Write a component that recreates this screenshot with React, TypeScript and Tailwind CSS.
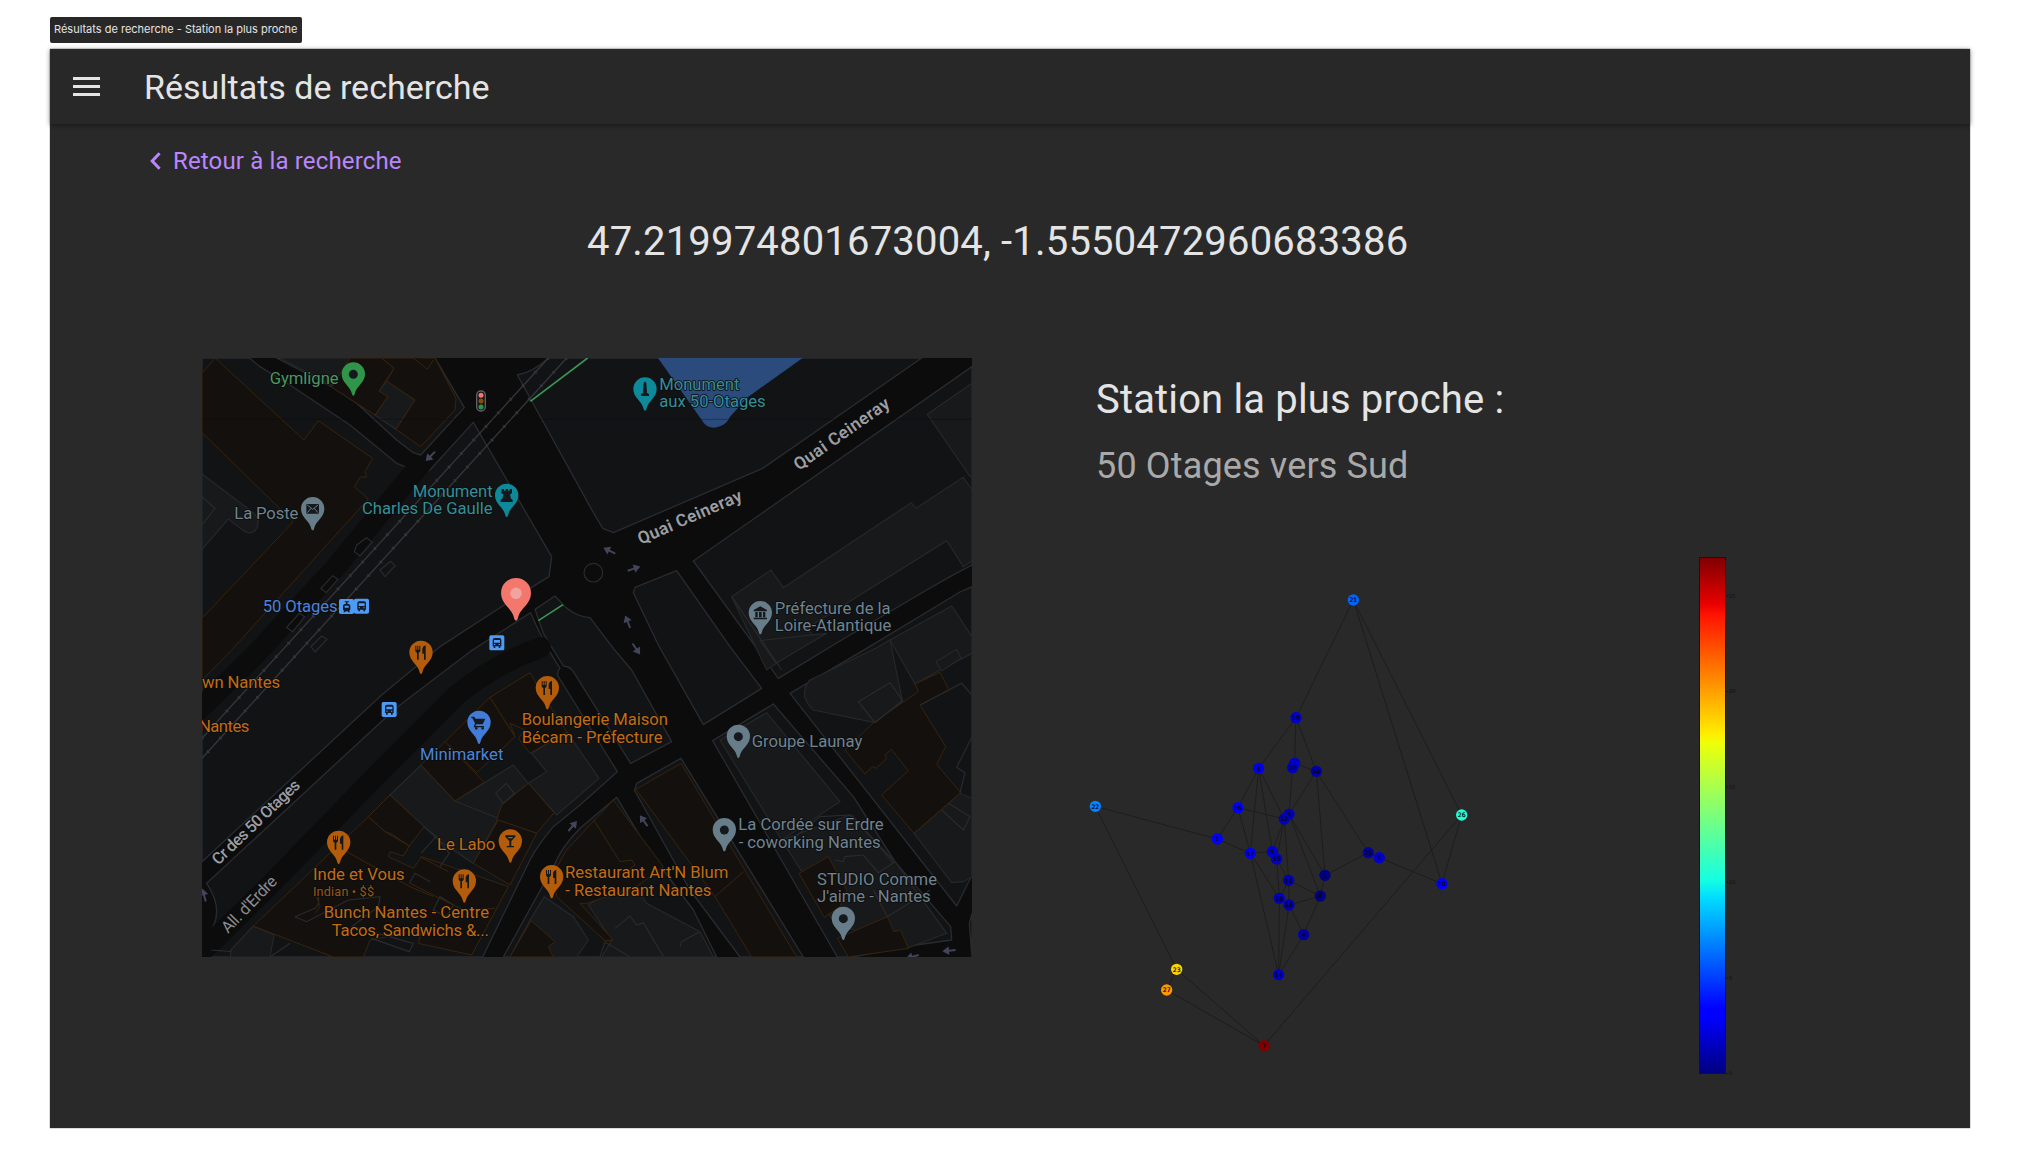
import { Fragment } from "react";
import type { ReactNode } from "react";

/* ---------- map data (units: a third of a pixel) ---------- */

const LAND = "#111315";
const GREY = "#17191a";
const BROWN = "#14100d";

const blocks: string[] = [
  // city blocks bounded by streets
  "M6 24 H148 L180 50 L270 105 L450 225 L590 340 L634 357 L668 367 L690 360 L820 217 L1055 620 L1047 680 L990 715 L720 890 L545 1035 L6 1535 Z",
  "M230 24 L410 118 L470 160 L590 270 L640 308 L662 315 L793 173 L705 24 Z",
  "M1045 24 Q1000 66 952 75 L1170 470 L1208 535 L1240 548 L1688 355 L2165 24 Z",
  "M1305 712 L1430 662 L1590 890 L1685 1015 L1510 1124 L1375 885 L1300 728 Z",
  "M1480 633 L2316 50 V645 L2250 680 L2180 720 L1925 870 L1735 985 L1670 895 Z",
  "M1770 1030 L2000 895 L2280 726 L2316 710 V1575 L2270 1668 Z",
  "M1538 1172 L1720 1062 L1960 1340 L2085 1535 L2252 1730 L2255 1770 L2125 1788 L1960 1821 H1912 Z",
  "M1005 778 L1065 738 L1095 770 Q1130 800 1170 803 L1240 895 L1295 960 L1415 1175 L1292 1240 L1120 965 Q1112 950 1090 948 L1030 850 Z",
  "M1305 1318 L1310 1300 L1443 1225 L1810 1821 H1620 L1470 1620 L1303 1320 Z",
  "M1140 1435 L1250 1342 L1345 1500 L1480 1680 L1550 1821 H910 L1060 1550 Q1085 1490 1140 1435 Z",
  "M810 905 L992 788 L1008 825 L1040 890 L1080 955 Q1070 965 1074 978 L1252 1265 L1140 1365 L1060 1430 Q1010 1490 990 1530 L848 1821 H34 L34 1800 L20 1758 Q80 1690 20 1600 L560 1100 L600 1065 Z",
  "M2316 1690 L2308 1722 L2316 1821 Z",
];

const greyAreas: string[] = [
  "M240 24 L395 105 L455 24 Z",
  "M560 93 L645 150 L588 238 L525 195 L563 140 L537 123 Z",
  "M6 372 L160 488 Q182 510 170 535 Q155 560 128 540 L85 507 L6 598 Z",
  "M2182 193 L2316 100 V378 L2310 380 Z",
  "M1595 740 L1713 660 L1750 713 L2134 458 L2148 475 L2290 382 L2316 420 V632 L2290 650 L2240 572 L1820 835 L1845 862 L1700 960 Z",
  "M1680 872 L1728 940 L1880 850 Z",
  "M1830 990 Q1810 1010 1814 1040 Q1820 1060 1840 1080 L2025 1118 L2107 1052 L2070 870 L2030 893 Z",
  "M2070 870 L2255 768 L2316 860 V910 L2210 965 L2145 1002 Z",
  "M2208 935 L2270 898 L2283 925 L2225 963 Z",
  "M1560 1170 L1700 1088 L1920 1355 L1745 1470 Z",
  "M1745 1470 L1950 1395 L2085 1535 L2240 1750 L2120 1795 L1905 1720 Z",
  "M2142 1450 L2280 1330 L2316 1345 V1580 L2290 1595 L2255 1598 Z",
  "M570 1335 L663 1245 L765 1353 L895 1405 L820 1540 L715 1470 L672 1430 Z",
  "M765 1353 L940 1245 L985 1300 L905 1365 L895 1405 Z",
  "M1100 1145 L1197 1285 L1070 1395 L985 1300 L1040 1265 L995 1210 Z",
  "M160 1728 L222 1755 L210 1821 H92 V1800 Z",
  "M1165 1665 L1290 1585 L1340 1660 L1500 1745 L1540 1821 H1205 L1235 1770 Z",
  "M1033 1640 L1120 1700 L1165 1770 L1130 1821 H930 L990 1710 Z",
];

const brownAreas: string[] = [
  "M6 70 L45 24 L312 270 L355 212 L518 325 L495 365 L500 382 L482 380 L463 410 L505 447 L95 900 L6 990 V805 L280 515 L6 248 Z",
  "M450 24 H545 L582 55 L537 123 L563 140 L525 195 L395 112 Z",
  "M545 24 H705 L768 145 L765 180 L662 290 L588 238 L645 150 L560 93 L582 55 Z",
  "M640 24 L682 58 L700 30",
  "M735 1175 L870 1042 L945 1160 L830 1268 Z",
  "M870 1042 L990 968 L1035 1045 L1100 1145 L990 1210 L955 1165 L975 1140 L930 1120 L945 1160 Z",
  "M663 1245 L735 1175 L852 1297 L765 1353 Z",
  "M985 1300 L1062 1388 L1010 1450 L890 1410 L905 1365 Z",
  "M895 1410 L1010 1450 L930 1605 L820 1540 Z",
  "M505 1400 L570 1335 L672 1430 L628 1488 L575 1452 L555 1445 Z",
  "M160 1728 L505 1400 L555 1445 L628 1488 L610 1518 L570 1505 L565 1520 L640 1555 L665 1520 L925 1610 L815 1815 L655 1780 L665 1740 L510 1770 L490 1821 H400 Z",
  "M1308 1318 L1443 1240 L1790 1821 H1655 L1545 1640 Z",
  "M1100 1500 L1240 1350 L1390 1550 L1310 1610 L1160 1660 L1140 1660 L1240 1770 L1215 1772 L1070 1640 L1060 1570 Z",
  "M930 1821 L993 1712 L1065 1775 L1045 1790 L1060 1821 Z",
  "M2145 1002 L2220 967 L2247 1020 L2160 1065 L2237 1190 L2210 1243 L2282 1328 L2142 1450 L2045 1335 L2125 1262 L2074 1198 L2055 1215 L2060 1225 L2028 1255 L2018 1250 L1995 1272 L1935 1200 L2020 1118 L2155 1025 Z",
  "M1797 1570 L1885 1520 L1940 1620 L1920 1670 L1873 1702 Z",
  "M1912 1765 L2062 1700 L2082 1745 L2102 1740 L2125 1795 L1945 1821 Z",
];

const detailLines: string[] = [
  "M470 585 L500 563 L517 577 L480 618 L463 605 Z M540 660 L572 634 L585 647 L555 680 Z M363 715 L398 677 L414 688 L378 728 Z M260 832 L298 790 L314 800 L278 846 Z M333 890 L365 858 L381 868 L345 906 Z",
  "M6 440 L45 475 L6 525",
  "M1595 740 L1745 960",
  "M1750 1490 L1860 1400 L1950 1395 M1955 1395 L2080 1538 M1905 1530 L1930 1535 L1935 1520 L1990 1515 L2035 1568 L2085 1535 M2020 1620 L2062 1700 L2190 1620",
  "M887 1330 L918 1300 L943 1330 L910 1360 Z M663 1510 L708 1460 L748 1510 L720 1550 M672 1430 L715 1465",
  "M285 1700 L345 1675 Q360 1665 355 1640 M285 1700 L320 1715 L445 1650 L540 1640 L535 1670 L455 1730 M460 1730 L640 1780 L628 1805 L515 1765",
  "M700 1680 L720 1640 L760 1665 L740 1700 Z M628 1600 L645 1570 L690 1595",
  "M2160 1065 L2285 1000 L2316 1035 M2316 1160 L2270 1252 L2295 1268 L2280 1328 M2225 1380 L2290 1440 L2310 1400 L2245 1360",
  "M1975 1055 L2070 998 L2108 1052 L2025 1118 Z",
  "M1245 1735 L1290 1698 L1310 1725 L1330 1718 L1390 1820 M1440 1790 L1445 1775 L1500 1745 M1200 1820 L1215 1776 L1290 1820",
  "M34 1800 L95 1805 M210 1821 L270 1780",
];

const brownLines: string[] = [
  "M440 1505 L630 1610 L700 1640 M630 1600 L790 1680 L885 1675 M660 1520 L745 1565 M1180 1408 L1260 1535 L1295 1530 L1305 1545 L1280 1565 M1545 1640 L1630 1565 M350 1640 L360 1670 L345 1690",
];

/* railway tracks with sleepers */
const tracks = ["M1045 24 L6 1165", "M1100 24 L6 1225"];

type Pin = { x: number; y: number; color: string; icon: string; scale?: number };
const pins: Pin[] = [
  { x: 460, y: 137, color: "#2e9549", icon: "dot" },
  { x: 338, y: 541, color: "#677d8a", icon: "mail" },
  { x: 920, y: 501, color: "#0d8999", icon: "castle" },
  { x: 1335, y: 182, color: "#0d8999", icon: "monument" },
  { x: 1681, y: 853, color: "#677d8a", icon: "bank" },
  { x: 663, y: 972, color: "#b35d0c", icon: "food" },
  { x: 1042, y: 1078, color: "#b35d0c", icon: "food" },
  { x: 416, y: 1542, color: "#b35d0c", icon: "food" },
  { x: 931, y: 1538, color: "#b35d0c", icon: "bar" },
  { x: 793, y: 1658, color: "#b35d0c", icon: "food" },
  { x: 1055, y: 1645, color: "#b35d0c", icon: "food" },
  { x: 837, y: 1182, color: "#427cd9", icon: "cart" },
  { x: 1615, y: 1224, color: "#677d8a", icon: "dot" },
  { x: 1573, y: 1504, color: "#677d8a", icon: "dot" },
  { x: 1930, y: 1770, color: "#677d8a", icon: "dot" },
  { x: 948, y: 812, color: "#f4776d", icon: "target", scale: 1.28 },
];

const glyphs: Record<string, ReactNode> = {
  dot: <circle r="13.5" />,
  target: <circle r="13.5" fill="#f1a3a0" />,
  mail: (
    <g>
      <rect x="-19" y="-15" width="38" height="29" rx="2" />
      <path d="M-16 -12 L0 1 L16 -12 M-16 11 L-5 -2 M16 11 L5 -2" fill="none" stroke="#677d8a" strokeWidth="3" />
    </g>
  ),
  castle: <path d="M-15 -20 h7 v5 h5 v-5 h7 v5 h5 v-5 h7 v13 l-6 3 l3 13 l5 3 v7 h-36 v-7 l5 -3 l3 -13 l-6 -3 Z" />,
  monument: <path d="M0 -24 L4 -18 L6 8 L5 10 L12 14 V20 H-12 V14 L-5 10 L-6 8 L-4 -18 Z" />,
  bank: <path d="M0 -20 L20 -9 V-5 H-20 V-9 Z M-15 -3 h7 v16 h-7 Z M-4 -3 h8 v16 h-8 Z M8 -3 h7 v16 h-7 Z M-20 14 H20 V19 H-20 Z" />,
  food: <path d="M-17 -21 h3 v12 h3 v-12 h3 v12 h3 v-12 h3 v15 q0 5 -5 6 V21 h-5 V0 q-5 -1 -5 -6 Z M4 -12 q1 -8 10 -10 V21 h-5 V3 h-5 Z" />,
  bar: <path d="M-15 -18 H15 V-14 L3 -1 V14 H11 V18 H-11 V14 H-3 V-1 L-15 -14 Z M-8 -13 L-5 -9 H5 L8 -13 Z" fillRule="evenodd" />,
  cart: <path d="M-22 -18 h8 l3 6 h30 l-8 17 h-19 l-3 5 h26 v4 h-31 l4 -12 l-8 -16 h-4 Z M-12 17 a4 4 0 1 0 8 0 a4 4 0 1 0 -8 0 M7 17 a4 4 0 1 0 8 0 a4 4 0 1 0 -8 0" />,
};

type Label = { x: number; y: number; w: number; t: string; c: string; size?: number };
const GREEN = "#4b975f";
const TEAL = "#358f96";
const SLATE = "#70838e";
const ORANGE = "#c16c14";
const BLUE = "#4b83d9";
const labels: Label[] = [
  { x: 209, y: 101, w: 207, t: "Gymligne", c: GREEN },
  { x: 103, y: 506, w: 192, t: "La Poste", c: SLATE },
  { x: 638, y: 441, w: 240, t: "Monument", c: TEAL },
  { x: 486, y: 491, w: 392, t: "Charles De Gaulle", c: TEAL },
  { x: 1378, y: 120, w: 240, t: "Monument", c: TEAL },
  { x: 1378, y: 170, w: 319, t: "aux 50-Otages", c: TEAL },
  { x: 188, y: 785, w: 225, t: "50 Otages", c: BLUE },
  { x: 1724, y: 791, w: 348, t: "Préfecture de la", c: SLATE },
  { x: 1724, y: 844, w: 350, t: "Loire-Atlantique", c: SLATE },
  { x: 6, y: 1015, w: 234, t: "wn Nantes", c: ORANGE },
  { x: -3, y: 1146, w: 151, t: "Nantes", c: ORANGE },
  { x: 660, y: 1230, w: 250, t: "Minimarket", c: BLUE },
  { x: 965, y: 1126, w: 439, t: "Boulangerie Maison", c: ORANGE },
  { x: 965, y: 1178, w: 423, t: "Bécam - Préfecture", c: ORANGE },
  { x: 711, y: 1501, w: 175, t: "Le Labo", c: ORANGE },
  { x: 339, y: 1590, w: 275, t: "Inde et Vous", c: ORANGE },
  { x: 339, y: 1637, w: 183, t: "Indian • $$", c: "#9a5714", size: 38 },
  { x: 371, y: 1703, w: 496, t: "Bunch Nantes - Centre", c: ORANGE },
  { x: 395, y: 1757, w: 472, t: "Tacos, Sandwichs &...", c: ORANGE },
  { x: 1095, y: 1585, w: 490, t: "Restaurant Art'N Blum", c: ORANGE },
  { x: 1096, y: 1637, w: 438, t: "- Restaurant Nantes", c: ORANGE },
  { x: 1655, y: 1191, w: 332, t: "Groupe Launay", c: SLATE },
  { x: 1615, y: 1441, w: 436, t: "La Cordée sur Erdre", c: SLATE },
  { x: 1616, y: 1494, w: 426, t: "- coworking Nantes", c: SLATE },
  { x: 1851, y: 1604, w: 360, t: "STUDIO Comme", c: SLATE },
  { x: 1851, y: 1655, w: 341, t: "J'aime - Nantes", c: SLATE },
];

const arrows: [number, number, number][] = [
  [691, 319, 135],
  [1228, 602, 207],
  [1302, 656, -18],
  [1283, 815, -112],
  [1309, 897, 55],
  [1118, 1428, -50],
  [1331, 1412, -125],
  [12, 1635, -105],
  [2247, 1802, 175],
  [2137, 1820, 165],
];

const stops: [number, number][] = [
  [485, 769],
  [891, 879],
  [568, 1079],
];

function BusStop({ x, y }: { x: number; y: number }) {
  return (
    <g transform={`translate(${x} ${y})`}>
      <rect x="-23" y="-23" width="45" height="45" rx="5" fill="#4d9bf5" />
      <path
        d="M-13 -9 Q-13 -15 -7 -15 H7 Q13 -15 13 -9 V10 H10 V15 H5 V10 H-5 V15 H-10 V10 H-13 Z M-9 -9 V-1 H9 V-9 Z M-9 3 V6 H-5 V3 Z M5 3 V6 H9 V3 Z"
        fillRule="evenodd"
        fill="#101a2a"
      />
    </g>
  );
}

function CityMap() {
  return (
    <svg viewBox="6 24 2310 1797" preserveAspectRatio="none" className="block h-[599px] w-[770px] shrink-0 bg-[#0c0c0c]" fontFamily="Roboto, sans-serif">
      <g fill={LAND} stroke="#2a2b2f" strokeWidth="4" strokeLinejoin="round">
        {blocks.map((d, i) => <path key={i} d={d} />)}
      </g>
      <g fill="none" stroke="#0c0c0c" strokeWidth="62" strokeLinejoin="round">
        <path d="M668 335 L400 660 L160 920 L-20 1095" />
        <path d="M1022 892 Q880 945 770 1035 L560 1245 L200 1615 L-10 1820" strokeLinecap="round" />
      </g>
      <g fill={GREY} stroke="#26282a" strokeWidth="3.5">
        {greyAreas.map((d, i) => <path key={i} d={d} />)}
      </g>
      <g fill={BROWN} stroke="#38240f" strokeWidth="3">
        {brownAreas.map((d, i) => <path key={i} d={d} />)}
      </g>
      <g fill="none" stroke="#292b2d" strokeWidth="3.5">
        {detailLines.map((d, i) => <path key={i} d={d} />)}
        <circle cx="1180" cy="668" r="28" />
      </g>
      <g fill="none" stroke="#38240f" strokeWidth="3">
        {brownLines.map((d, i) => <path key={i} d={d} />)}
      </g>
      <g fill="none" stroke="#35363a">
        {tracks.map((d, i) => (
          <Fragment key={i}>
            <path d={d} strokeWidth="4" />
            <path d={d} strokeWidth="10" strokeDasharray="5 50" />
          </Fragment>
        ))}
      </g>
      <path d="M1374 24 L1512 220 Q1530 240 1560 229 Q1582 220 1590 200 L1645 140 L1808 24 Z" fill="#2b4b7d" />
      <path d="M6 208 H2316" stroke="#0a0c10" strokeOpacity="0.35" strokeWidth="3" />
      <path d="M1163 24 L991 154 M1015 812 L1089 764" stroke="#3a9557" strokeWidth="5" />

      <g fill="#42445a">
        {arrows.map(([x, y, a], i) => (
          <path key={i} transform={`translate(${x} ${y}) rotate(${a})`} d="M-20 -3 H0 V-13 L20 0 L0 13 V3 H-20 Z" />
        ))}
      </g>

      <g>
        <rect x="830" y="123" width="26" height="60" rx="12" fill="#161618" stroke="#606166" strokeWidth="4" />
        <circle cx="843" cy="136" r="7.5" fill="#f4776d" />
        <circle cx="843" cy="153" r="7.5" fill="#8a4c0c" />
        <circle cx="843" cy="171" r="7.5" fill="#2e9549" />
      </g>

      <g>
        <rect x="417" y="747" width="45" height="45" rx="5" fill="#4d9bf5" />
        <path d="M434 754 H447 V757 H442 V761 Q451 762 451 768 V779 L447 783 L451 787 H445 L442 784 H438 L435 787 H429 L433 783 L429 779 V768 Q429 762 438 761 V757 H434 Z M434 767 V773 H446 V767 Z" fillRule="evenodd" fill="#101a2a" />
      </g>
      {stops.map(([x, y]) => <BusStop key={x} x={x} y={y} />)}

      {pins.map((p) => (
        <g key={`${p.x}-${p.y}`} transform={`translate(${p.x} ${p.y}) scale(${p.scale ?? 1})`}>
          <path d="M0 0 C-3 0 -4 -4 -5 -8 C-10 -30 -35 -38 -35 -65 A35 35 0 0 1 35 -65 C35 -38 10 -30 5 -8 C4 -4 3 0 0 0 Z" fill={p.color} />
          <g transform="translate(0 -64)" fill="#15181c">{glyphs[p.icon]}</g>
        </g>
      ))}

      <g stroke="#0b0c0e" strokeWidth="5" strokeLinejoin="round" className="[paint-order:stroke]">
        {labels.map((l) => (
          <text key={`${l.x}-${l.y}`} x={l.x} y={l.y} fontSize={l.size ?? 50} textLength={l.w} fill={l.c}>
            {l.t}
          </text>
        ))}
        <g fontSize="52" fontWeight="600" fill="#9c9ea1">
          <text transform="translate(1322 584) rotate(-23.5)" textLength="336">Quai Ceineray</text>
          <text transform="translate(1796 363) rotate(-35)" textLength="338">Quai Ceineray</text>
          <text transform="translate(55 1547) rotate(-43.8)" textLength="344" fontSize="49" fontWeight="500">Cr des 50 Otages</text>
          <text transform="translate(84 1752) rotate(-46)" textLength="216" fontSize="49" fontWeight="400" fill="#8b8d90">All. d'Erdre</text>
        </g>
      </g>
    </svg>
  );
}

/* ---------- station graph (units: a third of a pixel) ---------- */

type Node = [id: number, x: number, y: number, color: string];
const nodes: Node[] = [
  [0, 721, 948, "#000080"], [1, 412, 777, "#0000ff"], [2, 644, 550, "#0000c8"], [3, 627, 703, "#0000b6"],
  [4, 671, 1064, "#0000a4"], [5, 735, 886, "#000080"], [6, 898, 833, "#0000d1"], [7, 552, 1397, "#800000"],
  [8, 536, 565, "#0000f1"], [9, 577, 815, "#0000cd"], [10, 1086, 911, "#0000ff"], [11, 626, 901, "#0000b6"],
  [12, 613, 717, "#0000bf"], [13, 627, 975, "#0000b2"], [14, 596, 1184, "#0000c8"], [15, 590, 837, "#0000c8"],
  [16, 474, 683, "#0000ff"], [17, 511, 820, "#0000f1"], [18, 598, 955, "#0000bf"], [19, 648, 413, "#0000d1"],
  [20, 638, 563, "#0000bf"], [21, 820, 60, "#0064ff"], [22, 46, 679, "#0084ff"], [23, 290, 1168, "#ffd300"],
  [24, 709, 574, "#0000a8"], [25, 865, 818, "#0000ad"], [26, 1145, 705, "#1fffd7"], [27, 260, 1230, "#ff9800"],
];
const edges: [number, number][] = [
  [21, 19], [21, 10], [21, 26], [19, 8], [19, 2], [19, 24], [2, 24], [8, 16], [8, 17], [8, 9], [8, 12], [22, 1], [22, 23],
  [16, 12], [16, 1], [16, 17], [20, 3], [24, 3], [24, 5], [24, 25], [12, 9], [12, 15], [12, 11], [3, 5], [3, 0], [1, 17],
  [17, 9], [17, 18], [17, 14], [15, 11], [15, 18], [11, 18], [11, 13], [11, 0], [18, 13], [13, 0], [18, 14], [13, 14],
  [13, 4], [0, 4], [4, 14], [0, 5], [5, 25], [25, 6], [6, 10], [26, 10], [26, 7], [23, 27], [23, 7], [27, 7],
];

function StationGraph() {
  return (
    <svg viewBox="0 0 1200 1470" className="-ml-4 h-[490px] w-[400px] shrink-0" fontFamily="'DejaVu Sans', sans-serif">
      <g stroke="#1d1d1d" strokeWidth="3">
        {edges.map(([a, b]) => (
          <line key={`${a}-${b}`} x1={nodes[a][1]} y1={nodes[a][2]} x2={nodes[b][1]} y2={nodes[b][2]} />
        ))}
      </g>
      {nodes.map(([id, x, y, color]) => (
        <g key={id}>
          <circle cx={x} cy={y} r="17" fill={color} />
          <text x={x} y={y + 6.5} textAnchor="middle" fontSize="18.5" fill="#000" stroke="#000" strokeWidth="0.6">{id}</text>
        </g>
      ))}
    </svg>
  );
}

const ticks = [25, 20, 15, 10, 5, 0];
const tickTop: Record<number, number> = { 25: 39, 20: 134.5, 15: 230, 10: 325.3, 5: 421, 0: 516.5 };

function ColorScale() {
  return (
    <svg viewBox="0 0 50 524" className="h-[524px] w-[50px] shrink-0" fontFamily="'DejaVu Sans', sans-serif">
      <defs>
        <linearGradient id="jet" x1="0" y1="1" x2="0" y2="0">
          <stop offset="0" stopColor="#000080" />
          <stop offset="0.11" stopColor="#0000ff" />
          <stop offset="0.125" stopColor="#0000ff" />
          <stop offset="0.34" stopColor="#00dcff" />
          <stop offset="0.375" stopColor="#14ffe2" />
          <stop offset="0.64" stopColor="#eeff08" />
          <stop offset="0.66" stopColor="#ffec00" />
          <stop offset="0.89" stopColor="#ff1200" />
          <stop offset="0.91" stopColor="#e80000" />
          <stop offset="1" stopColor="#800000" />
        </linearGradient>
      </defs>
      <rect x="4.5" y="0.5" width="26" height="516" fill="url(#jet)" stroke="#141414" strokeWidth="1" />
      {ticks.map((t) => (
        <g key={t}>
          <path d={`M31 ${tickTop[t]} h2.3`} stroke="#141414" strokeWidth="0.8" />
          <text x="34" y={tickTop[t] + 1.9} fontSize="5" fill="#0e0e0e">{t}</text>
        </g>
      ))}
    </svg>
  );
}

export default function App() {
  return (
    <div className="h-[1169px] w-[2020px] overflow-hidden bg-white px-[50px] pt-[17px] font-[Roboto,sans-serif] text-[#e4e4e4]">
      <div className="flex h-[26px] w-[251.5px] items-center justify-center rounded-xs bg-[#282828] font-[Inter,sans-serif] text-[11px] whitespace-nowrap">
        <span className="-mt-px">Résultats de recherche - Station la plus proche</span>
      </div>

      <div className="mt-[6px] flex h-[1079px] flex-col bg-[#292929] shadow-[0_0_1px_#292929]">
        <header className="flex h-[75px] shrink-0 items-center bg-[#282828] pl-[23px] shadow-[0_1px_5px_rgba(0,0,0,0.45)]">
          <svg viewBox="0 0 27 19" className="h-[19px] w-[27px] fill-[#e4e4e4]">
            <path d="M0 0 H27 V3 H0 Z M0 8 H27 V11 H0 Z M0 16 H27 V19 H0 Z" />
          </svg>
          <h1 className="ml-[44px] text-[34px] leading-none">Résultats de recherche</h1>
        </header>

        <a href="#" className="mt-[22px] flex h-[30px] w-fit items-center pl-[99.5px] text-[24px] tracking-[0.15px] text-[#bb86fc]">
          <svg viewBox="0 0 11 18" className="mr-[12.5px] h-[18px] w-[11px] fill-none stroke-[#bb86fc] stroke-[3]">
            <path d="M9.6 1.2 L2.2 9 L9.6 16.8" />
          </svg>
          Retour à la recherche
        </a>

        <h2 className="mt-[42px] ml-[537px] h-[48px] text-[40px] leading-[48px] tracking-[0.18px] whitespace-nowrap">
          47.219974801673004, -1.5550472960683386
        </h2>

        <main className="mt-[92px] flex pl-[152px]">
          <CityMap />
          <section className="ml-[124px] flex w-[700px] flex-col pt-[18px]">
            <h3 className="h-[48px] text-[40px] leading-[48px] tracking-[0.15px]">Station la plus proche :</h3>
            <p className="mt-[19px] h-[46px] text-[36px] leading-[46px] tracking-[0.15px] text-[#a9a9a9]">50 Otages vers Sud</p>
            <div className="mt-[68px] flex items-start">
              <div className="pt-[23px]">
                <StationGraph />
              </div>
              <div className="ml-[215px]">
                <ColorScale />
              </div>
            </div>
          </section>
        </main>
      </div>
    </div>
  );
}
